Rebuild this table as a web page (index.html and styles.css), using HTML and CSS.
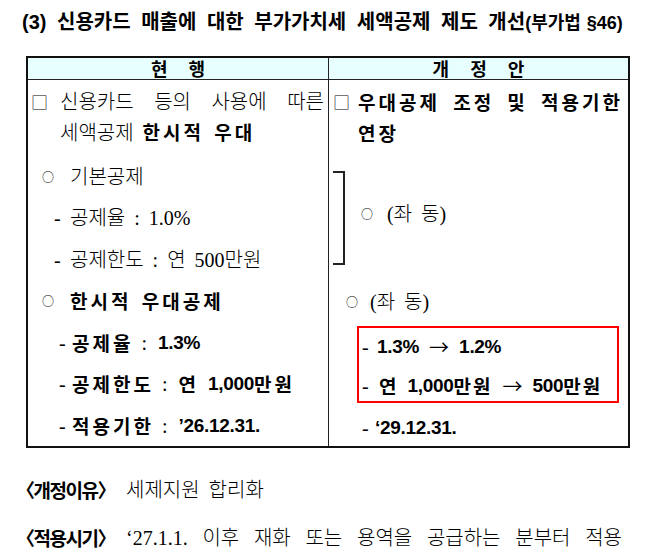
FILE: index.html
```html
<!DOCTYPE html>
<html lang="ko">
<head>
<meta charset="utf-8">
<title>신용카드 매출 세액공제</title>
<link rel="stylesheet" href="styles.css">
</head>
<body>
<h1 class="title">(3) 신용카드 매출에 대한 부가가치세 세액공제 제도 개선<span class="title-sub">(부가법 §46)</span></h1>

<div class="cmp">
  <div class="hd">현 행</div>
  <div class="hd hd-r">개 정 안</div>

  <div class="col col-l">
    <div class="lead">
      <span class="box">□</span>
      <div class="lead-text">
        <div class="just">신용카드 등의 사용에 따른</div>
        <div>세액공제 <b class="bk bk-gap">한시적 우대</b></div>
      </div>
    </div>
    <div class="it"><span class="mk mk-o">○</span><span>기본공제</span></div>
    <div class="it"><span class="mk mk-d">-</span><span>공제율 : 1.0%</span></div>
    <div class="it"><span class="mk mk-d">-</span><span>공제한도 : 연 500만원</span></div>
    <div class="it"><span class="mk mk-o">○</span><b class="bk">한시적 우대공제</b></div>
    <div class="it"><span class="mk mk-db">-</span><b class="bk">공제율</b><span class="colon">:</span><b class="bn">1.3%</b></div>
    <div class="it"><span class="mk mk-db">-</span><b class="bk">공제한도</b><span class="colon">:</span><b class="bk">연</b>&nbsp;<b class="bn">1,000</b><b class="bk">만원</b></div>
    <div class="it"><span class="mk mk-db">-</span><b class="bk">적용기한</b><span class="colon">:</span><b class="bn">’26.12.31.</b></div>
  </div>

  <div class="col col-r">
    <div class="lead lead-r">
      <span class="box">□</span>
      <div class="lead-text lead-text-r">
        <div class="just"><b class="bk">우대공제 조정 및 적용기한</b></div>
        <div><b class="bk">연장</b></div>
      </div>
    </div>
    <div class="grp">
      <span class="brk"></span>
      <div class="grp-text"><span class="mk mk-g">○</span><span>(좌 동)</span></div>
    </div>
    <div class="it"><span class="mk mk-or">○</span><span>(좌 동)</span></div>
    <div class="hl">
      <div class="hl-ln hl-1"><span class="mk mk-h">-</span><b class="bn">1.3%</b><span class="arr">→</span><b class="bn">1.2%</b></div>
      <div class="hl-ln hl-2"><span class="mk mk-h2">-</span><b class="bk">연</b>&nbsp;<b class="bn">1,000</b><b class="bk">만원</b><span class="arr">→</span><b class="bn">500</b><b class="bk">만원</b></div>
    </div>
    <div class="it"><span class="mk mk-dr">-</span><b class="bn">‘29.12.31.</b></div>
  </div>
</div>

<div class="notes">
  <div class="note"><b class="note-k">〈개정이유〉</b><span class="note-v">세제지원 합리화</span></div>
  <div class="note"><b class="note-k">〈적용시기〉</b><span class="note-v just">‘27.1.1. 이후 재화 또는 용역을 공급하는 분부터 적용</span></div>
</div>
</body>
</html>
```

FILE: styles.css
```css
* { box-sizing: border-box; }

body {
  margin: 0;
  width: 657px;
  background: #fff;
  color: #000;
  font-family: "Liberation Serif", "Noto Sans CJK KR", serif;
  font-size: 20px;
  letter-spacing: 0;
  word-spacing: 4px;
}

b { font-weight: 700; }

.title {
  margin: 7px 0 0 22px;
  font-family: "Liberation Sans", "Noto Sans CJK KR", sans-serif;
  font-size: 20px;
  font-weight: 700;
  line-height: 30px;
  letter-spacing: 0;
  word-spacing: 5px;
  white-space: nowrap;
  color: #000;
}
.title-sub { font-size: 18px; word-spacing: 1px; }

.cmp {
  margin: 18px 0 0 26px;
  width: 604px;
  border: 2px solid #111;
  display: grid;
  grid-template-columns: 300px 300px;
  grid-template-rows: 22px 366px;
}

.hd {
  background: #e8ffff;
  border-bottom: 1px solid #222;
  text-align: center;
  font-family: "Noto Sans CJK KR", sans-serif;
  font-weight: 700;
  font-size: 18px;
  line-height: 21px;
  word-spacing: 16px;
  color: #000;
}
.hd-r { border-left: 1px solid #222; }

.col-r { border-left: 1px solid #222; }

.lead {
  display: flex;
  padding-top: 7px;
  margin-bottom: 8px;
}
.box {
  display: inline-block;
  flex: none;
  width: 32px;
  padding-left: 3px;
  line-height: 30px;
  font-family: "Noto Sans CJK KR", sans-serif;
  font-weight: 300;
  font-size: 17px;
}
.lead-text {
  width: 264px;
  line-height: 30px;
  font-weight: 300;
  white-space: nowrap;
}
.lead-r .box { width: 29px; padding-left: 4px; }
.lead-text-r { width: 265px; }
.just { text-align: justify; text-align-last: justify; }

.bk {
  font-family: "Noto Sans CJK KR", sans-serif;
  font-weight: 700;
  font-size: 19px;
  letter-spacing: 3px;
  word-spacing: 2px;
  color: #000;
}
.bk-gap { margin-left: 0; }
.bn {
  font-family: "Liberation Sans", "Noto Sans CJK KR", sans-serif;
  font-weight: 700;
  font-size: 19px;
  letter-spacing: -0.3px;
  color: #000;
}
.colon { margin: 0 11px 0 8px; font-weight: 300; }

.it {
  height: 41.5px;
  line-height: 30px;
  display: flex;
  align-items: center;
  white-space: nowrap;
  font-weight: 300;
}

.mk { display: inline-block; flex: none; }
.mk-o, .mk-or, .mk-g {
  font-family: "Noto Sans CJK KR", sans-serif;
  font-size: 12px;
  font-weight: 400;
}
.mk-o { margin-left: 14px; width: 28px; }
.mk-d { margin-left: 26px; width: 16px; }
.mk-db { margin-left: 31px; width: 13px; }
.mk-or { margin-left: 17px; width: 24px; }
.mk-dr { margin-left: 33px; width: 13px; }

.grp {
  display: flex;
  height: 124.5px;
  align-items: center;
  padding-bottom: 10px;
  white-space: nowrap;
  font-weight: 300;
}
.brk {
  align-self: flex-start;
  margin: 14px 0 0 4px;
  width: 12px;
  height: 94px;
  border: 2px solid #222;
  border-left: none;
  flex: none;
}
.grp-text { display: flex; align-items: center; margin-left: 16px; line-height: 30px; }
.mk-g { width: 26px; }

.hl {
  margin: 3px 0 4px 28px;
  width: 262px;
  height: 77px;
  border: 2px solid #f00;
}
.hl-ln {
  display: flex;
  align-items: center;
  white-space: nowrap;
  line-height: 30px;
}
.hl-1 { height: 38px; }
.hl-2 { height: 35px; padding-top: 4px; }
.mk-h { margin-left: 3px; width: 15px; }
.mk-h2 { margin-left: 3px; width: 17px; }
.arr {
  margin: 0 10px;
  font-family: "Noto Sans CJK KR", sans-serif;
  font-weight: 400;
  font-size: 20px;
  letter-spacing: 0;
}
.hl-2 .bk { letter-spacing: 2px; }

.notes {
  margin: 27px 0 0 16px;
  width: 606px;
}
.note {
  display: flex;
  line-height: 30px;
  white-space: nowrap;
  margin-bottom: 18px;
}
.note-k {
  font-family: "Noto Sans CJK KR", sans-serif;
  font-weight: 700;
  font-size: 19px;
  letter-spacing: -1.5px;
  width: 110px;
  flex: none;
  color: #000;
}
.note-v { font-weight: 300; }
.note-v.just { flex: 1; }
```
